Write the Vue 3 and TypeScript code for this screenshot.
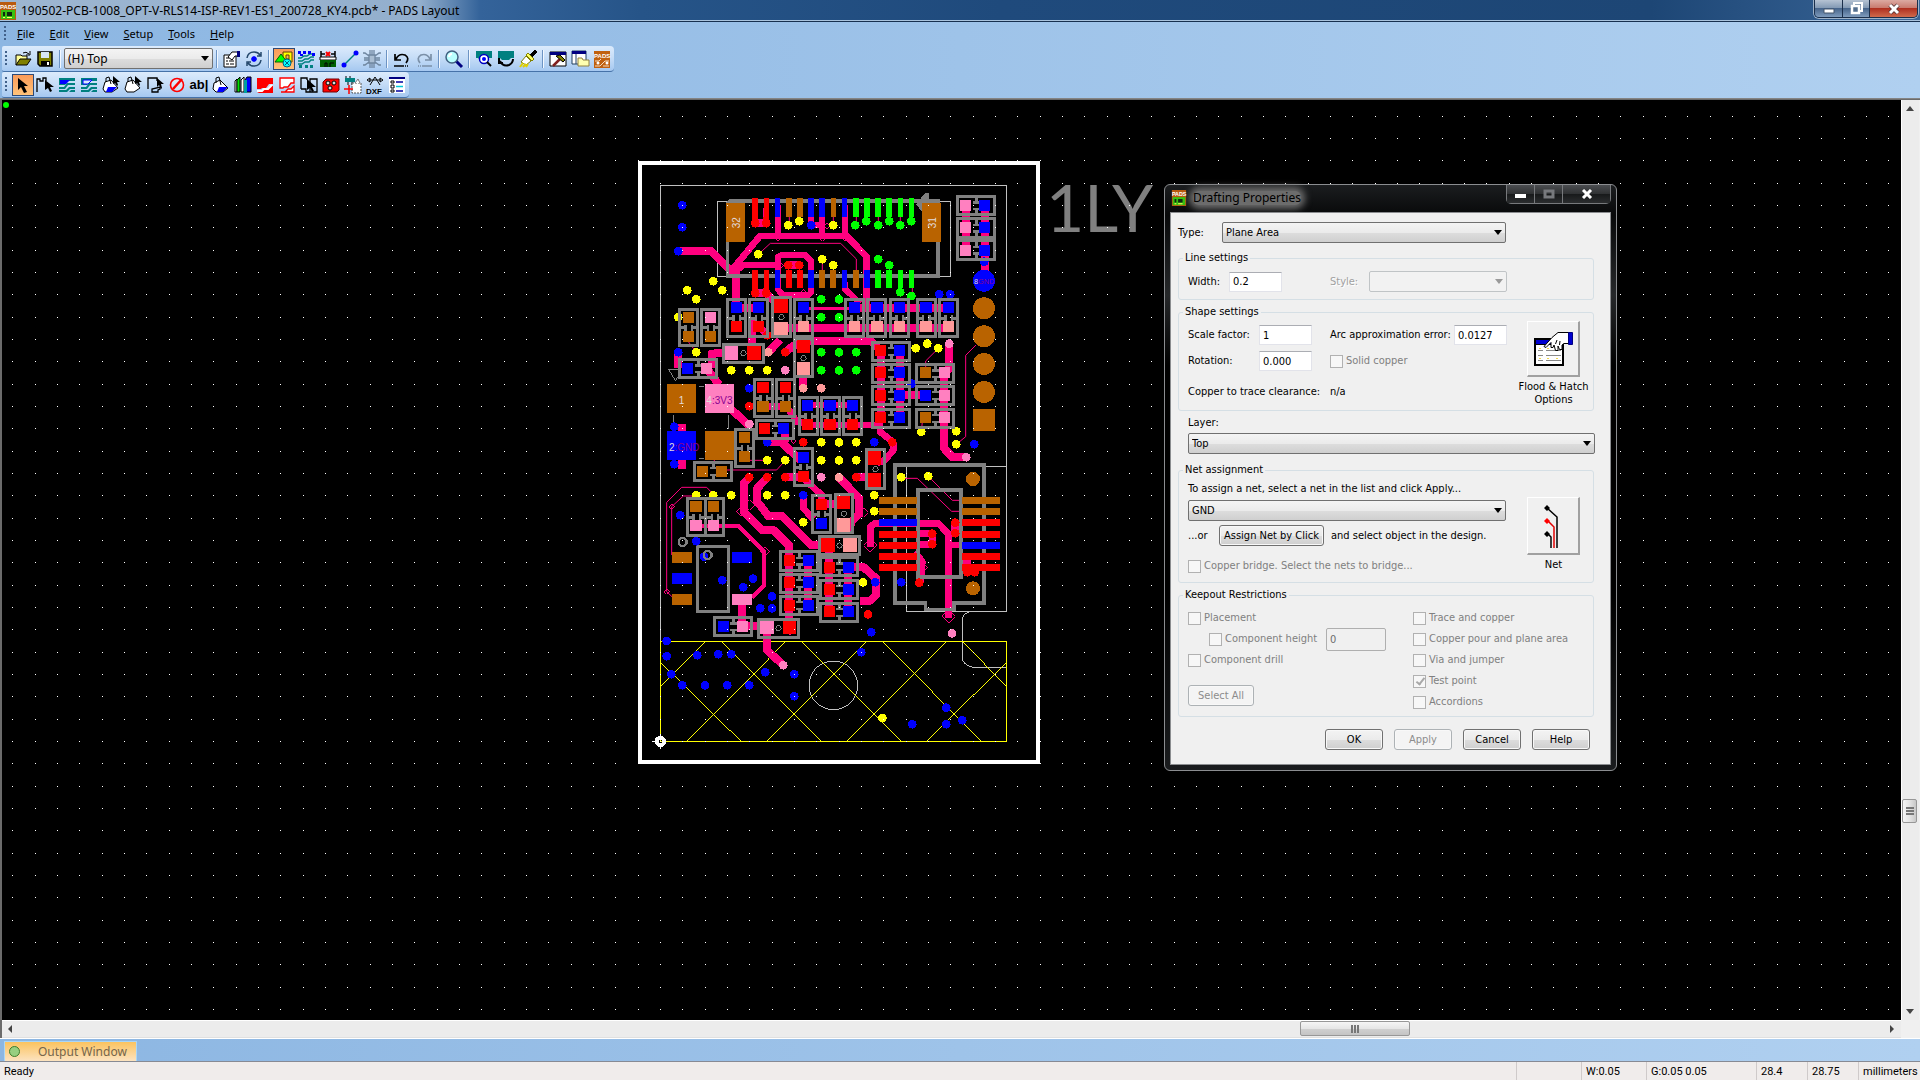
<script setup lang="ts">
import { ref } from 'vue'

type Pad = [x: number, y: number, w: number, h: number, fill: string]
type Trace = [width: number, points: string]
type Part = { box: [number, number, number, number]; a: Pad; b: Pad; round?: boolean }

const RED = '#ff0000'
const BLUE = '#0000ff'
const BROWN = '#b96300'
const PINK = '#ff80c0'
const SALMON = '#ff9999'
const GREEN = '#00ff00'
const YELLOW = '#ffff00'

const menus = ['File', 'Edit', 'View', 'Setup', 'Tools', 'Help']
const layer = ref('(H) Top')
const type = ref('Plane Area')
const dialogLayer = ref('Top')
const net = ref('GND')
const width = ref('0.2')
const scale = ref('1')
const arcError = ref('0.0127')
const rotation = ref('0.000')

const icons: Record<string, string> = {
  open: '<path d="M3 16V6h5l1 1h5v3" fill="#ffff99" stroke="#000"/><path d="M3 16l4-6h11l-4 6z" fill="#808000" stroke="#000"/><path d="M10 4q3-2 6 1m1-3v4h-4" fill="none" stroke="#000"/>',
  save: '<path d="M3 3h14v14H5l-2-2z" fill="#808000" stroke="#000" stroke-width="1.5"/><path d="M6 3h8v6H6z" fill="#d7e6f5"/><path d="M6 12h9v5H6z" fill="#000"/><path d="M12 13h2v3h-2z" fill="#fff"/>',
  props: '<path d="M2 6h12v12H2z" fill="#fff" stroke="#000"/><path d="M4 9h3m1 0h2M4 12h2m1 0h5M4 15h3m1 0h4" stroke="#000"/><path d="M6 8l4-5h7v4h-4l-3 4z" fill="#fff" stroke="#000"/><path d="M15 2h3v6h-3z" fill="#000080"/>',
  cycle: '<path d="M3 9q1-6 7-6 4 0 6 3m1-3v4h-4M17 11q-1 6-7 6-4 0-6-3m-1 3v-4h4" fill="none" stroke="#24476b" stroke-width="1.5"/><path d="M10 7v6M7 10h6M8 8l4 4m0-4l-4 4" stroke="#0000ff" stroke-width="1.5"/>',
  draft: '<path d="M9 3h9v10H9z" fill="#ffff00" stroke="#604000"/><path d="M12 6h3v4h-3z" fill="#fbb160" stroke="#604000"/><path d="M1 13l6-8 6 8z" fill="#00ff00" stroke="#006000"/><circle cx="13" cy="14" r="4" fill="#00ffff" stroke="#006080"/><path d="M11 12l4 4m0-4l-4 4" stroke="#006080"/>',
  nets: '<path d="M2 9h3l3-2h3l3-2h4M2 12h4l3-2h3l3-2h3M2 15h4l3-2h4l2-2h3" fill="none" stroke="#008080" stroke-width="1.5"/><path d="M2 2h3v3H2zM7 2h3v3H7zM12 2h3v3h-3zM16 4h3v3h-3zM4 5h3v2H4z" fill="#0000ff"/><path d="M3 16h3v3H3zM9 16h3v3H9zM14 16h3v3h-3z" fill="#008080"/>',
  dims: '<path d="M3 2v7m14-7v7M3 5h4m6 0h4" stroke="#000" stroke-width="1.5"/><path d="M8 3l4 4m0-4l-4 4" stroke="#f00" stroke-width="2"/><path d="M2 8h16v3H2z" fill="#fff" stroke="#000"/><path d="M2 11h16v7H2z" fill="#006000"/><path d="M7 18v-4h2v4m3 0v-4h4" stroke="#000" fill="none"/>',
  link: '<path d="M4 16L16 4" stroke="#008080" stroke-width="1.5"/><circle cx="4" cy="16" r="2.5" fill="#0000ff"/><circle cx="16" cy="4" r="2.5" fill="#0000ff"/>',
  chip: '<path d="M7 6h6v8H7zM8 6V1m2 5V1m2 5V1M8 14v5m2-5v5m2-5v5M7 7L3 4H1m6 5H2m5 2H2m5 2l-4 3H1M13 7l4-3h2m-6 5h5m-5 2h5m-5 2l4 3h2" fill="#a9bdd2" stroke="#6f86a0" stroke-width="1.3"/>',
  undo: '<path d="M3 5v6h6M4 10q3-6 9-4 5 3 1 8" fill="none" stroke="#000" stroke-width="1.7"/><path d="M2 17h14" stroke="#000" stroke-width="1.5" stroke-dasharray="10 1 1 1"/>',
  redo: '<path d="M17 5v6h-6M16 10q-3-6-9-4-5 3-1 8" fill="none" stroke="#7b90a8" stroke-width="1.7"/><path d="M4 17h14" stroke="#7b90a8" stroke-width="1.5" stroke-dasharray="1 1 1 1 10"/>',
  zoom: '<path d="M12 12l6 6" stroke="#000080" stroke-width="3"/><circle cx="8" cy="8" r="6" fill="#b9ffff" stroke="#406080" stroke-width="1.5"/><path d="M5 8q0-3 3-3" stroke="#fff" fill="none" stroke-width="2"/>',
  view1: '<path d="M2 2h16v7h-3l-2 2H6L4 9H2z" fill="#008080"/><circle cx="10" cy="10" r="4.500" fill="#fff" stroke="#0000c0" stroke-width="1.5"/><circle cx="10" cy="10" r="2" fill="#0000ff"/><path d="M13 13l4 4" stroke="#000" stroke-width="2"/>',
  view2: '<path d="M2 2h16v7h-3l-2 2H6L4 9H2z" fill="#008080"/><path d="M3 9v5h4M4 12q3 6 9 4 4-2 4-6" fill="none" stroke="#000" stroke-width="2"/>',
  brush: '<path d="M12 6l5-5 2 2-5 5z" fill="#000" stroke="#000"/><path d="M8 7l5 5-5 4-5-3z" fill="#fff" stroke="#808000"/><path d="M8 6l2-2 6 6-2 2z" fill="#ffff60" stroke="#808000"/><path d="M2 18l3-4m0 4l3-3m0 3l2-3" stroke="#e0d000" stroke-width="2"/>',
  hammer: '<path d="M2 3h16v14H2z" fill="#fff" stroke="#000"/><path d="M2 3h16v3H2z" fill="#000080"/><path d="M5 17l7-7" stroke="#802020" stroke-width="2.500"/><path d="M8 7l4-1 5 5-2 2z" fill="#808000" stroke="#000"/>',
  files: '<path d="M2 2h14v13H2z" fill="#fff" stroke="#204060"/><path d="M2 2h14v3H2z" fill="#000080"/><path d="M6 5v10" stroke="#204060"/><path d="M8 17V9h4l1 2h6v6z" fill="#ffffb0" stroke="#908040"/>',
  select: '<path d="M5 3v12l3-3 3 6 3-1-3-6h4z" fill="#000"/>',
  corner: '<path d="M2 17V4h3v2h3V3h3v3" fill="none" stroke="#000" stroke-width="1.3"/><path d="M10 5v10l3-2 2 4 2-1-2-4h4z" fill="#000"/>',
  plane1: '<path d="M2 3h16v3H11L8 10H2zM2 12h5l3-4h8v2h-7l-3 4H2zM2 15h7l3-3h6v2h-5l-3 3H2zM12 17l2-2h4v2z" fill="#008080"/><path d="M3 5h10l-4 4H3z" fill="#0000ff"/>',
  plane2: '<path d="M2 3h16v3H11L8 10H2zM2 12h5l3-4h8v2h-7l-3 4H2zM2 15h7l3-3h6v2h-5l-3 3H2zM12 17l2-2h4v2z" fill="#008080"/><path d="M4 5h9l-4 4H4z" fill="#d9e9fa" stroke="#0000ff"/>',
  pour1: '<path d="M4 7l6-2 7 8-6 4H4l-2-3z" fill="#fff" stroke="#000"/><path d="M7 12h9l-5 5H5z" fill="#0000ff"/><path d="M5 7V3l3-1 2 7" fill="none" stroke="#000"/><path d="M12 1v8l2-1 2 3 1-1-1-3h3z" fill="#000"/>',
  pour2: '<path d="M4 7l6-2 7 8-6 4H4l-2-3z" fill="#fff" stroke="#000"/><path d="M5 7V3l3-1 2 7" fill="none" stroke="#000"/><path d="M12 1v8l2-1 2 3 1-1-1-3h3z" fill="#000"/>',
  area: '<path d="M3 14V3h9v3m3 6v2l-2 1v2H7v-3z" fill="none" stroke="#000" stroke-width="1.3"/><path d="M12 3v9l2-2 2 4 1-1-1-4h3z" fill="#000"/>',
  no: '<circle cx="10" cy="10" r="6.500" fill="#fff" fill-opacity=".3" stroke="#f00" stroke-width="1.6"/><path d="M6 14l9-10" stroke="#f00" stroke-width="2.500"/>',
  pour3: '<path d="M3 8l6-3 8 8-5 4H5l-3-3z" fill="#fff" stroke="#000"/><path d="M8 12h9l-5 5H6z" fill="#0000ff"/><path d="M5 8V3l3-1 2 8" fill="none" stroke="#000"/>',
  library: '<path d="M2 6l2-2v13H2z" fill="#fff" stroke="#000"/><path d="M4 5l3-3v15H4z" fill="#00e000" stroke="#000"/><path d="M8 5l3-3v15H8z" fill="#fff" stroke="#000"/><path d="M12 5l2-3h4v15h-6z" fill="#0000ff" stroke="#000"/><path d="M11 5h3v13h-3z" fill="#00a0a0"/>',
  hatch1: '<path d="M2 3h16v6h-4l-3 4H7l-1 1H2z" fill="#f00"/><path d="M2 18h16v-7h-3l-3 4H8z" fill="#f00"/><path d="M2 16h5l2-2h4l4-4" stroke="#fff" fill="none" stroke-width="2"/>',
  hatch2: '<path d="M3 3h14v5h-3l-3 4H7l-1 1H3zM4 17h4l3-3h3l3-3v6z" fill="#fff" stroke="#f00" stroke-width="1.3"/>',
  pages: '<path d="M2 14V3h6v2M2 14h5v3h4M11 4h7v13h-7z" fill="none" stroke="#000" stroke-width="1.3"/><path d="M8 4v11l3-2 2 4 2-1-2-4h4z" fill="#000"/>',
  redchip: '<path d="M5 4h13v11l-2 2H2V7z" fill="#f00" stroke="#700000"/><circle cx="7" cy="8" r="2" fill="#ddd" stroke="#000"/><circle cx="13" cy="8" r="2" fill="#ddd" stroke="#000"/><circle cx="9" cy="13" r="2" fill="#ddd" stroke="#000"/>',
  place: '<path d="M2 3h10v4H2z" fill="#008080"/><path d="M5 7v3m4-3v3M3 3V1m4 2V1" stroke="#000"/><path d="M9 8h9v10H9z" fill="#fff" stroke="#555" stroke-dasharray="2 1"/><path d="M12 8l3-4 2 4" fill="#fff" stroke="#777"/><path d="M6 10v9M1 14h9" stroke="#f00" stroke-width="1.5"/>',
  list: '<path d="M2 2h16v16H2z" fill="#fff"/><path d="M2 2h16v2H2z" fill="#000080"/><path d="M4 6h3v2H4zM4 10h3v3H4zM4 15h3v2H4z" fill="#fff" stroke="#000"/><path d="M9 7h7M9 16h7" stroke="#0000a0" stroke-width="1.5"/><path d="M9 11.500h7" stroke="#00c8d8" stroke-width="1.5"/>',
}

const mainTools = [
  ['props', 'cycle'],
  ['draft', 'nets', 'dims', 'link', 'chip'],
  ['undo', 'redo'],
  ['zoom'],
  ['view1', 'view2', 'brush'],
  ['hammer', 'files', 'pads'],
]
const draftTools = [
  'select', 'corner', 'plane1', 'plane2', 'pour1', 'pour2', 'area', 'no', 'text',
  'pour3', 'library', 'hatch1', 'hatch2', 'pages', 'redchip', 'place', 'dxf', 'list',
]

/* Design grid, laid out from the board origin. */
const GRID = 22.335
const gridPath = Array.from({ length: 60 }, (_, r) =>
  Array.from({ length: 150 }, (_, c) => {
    const x = Math.round(660 + (c - 29) * GRID)
    const y = Math.round(741 + (r - 28) * GRID)
    return `M${x} ${y}h1v1h-1z`
  }).join(''),
).join('')

/* Board geometry is in units of a third of a pixel. */
const horizontal = (x: number, y: number, px: number, py: number, c1: string, c2: string, w = 120): Part => ({
  box: [x, y, w, 63],
  a: [px, py, 33, 33, c1],
  b: [px + 57, py, 33, 33, c2],
})
const vertical = (x: number, y: number, px: number, py: number, c1: string, c2: string, s = 33): Part => ({
  box: [x, y, 62, 118],
  a: [px, py, s, 33, c1],
  b: [px, py + 57, s, 33, c2],
})

const parts: Part[] = [
  horizontal(978, 121, 990, 135, PINK, BLUE),
  horizontal(978, 188, 990, 201, PINK, BLUE),
  horizontal(978, 254, 990, 269, PINK, BLUE),
  vertical(289, 430, 303, 441, BLUE, RED),
  vertical(356, 430, 369, 441, BLUE, RED),
  { box: [423, 424, 63, 126], a: [432, 432, 42, 42, RED], b: [432, 501, 42, 39, SALMON], round: true },
  vertical(490, 430, 504, 441, BLUE, SALMON),
  vertical(643, 430, 657, 441, BLUE, SALMON),
  vertical(710, 430, 723, 441, BLUE, SALMON, 36),
  vertical(778, 430, 791, 441, BLUE, SALMON),
  vertical(858, 430, 870, 441, BLUE, SALMON, 36),
  vertical(925, 430, 939, 441, BLUE, SALMON),
  vertical(145, 459, 159, 471, BROWN, BROWN),
  vertical(212, 459, 225, 471, PINK, BROWN),
  { box: [277, 564, 127, 62], a: [285, 573, 39, 42, PINK], b: [351, 573, 42, 42, RED], round: true },
  { box: [490, 550, 61, 120], a: [501, 555, 39, 39, RED], b: [501, 621, 39, 39, SALMON], round: true },
  horizontal(724, 558, 735, 570, RED, BLUE),
  horizontal(724, 624, 735, 637, RED, BLUE),
  horizontal(724, 690, 735, 705, RED, BLUE),
  horizontal(724, 759, 735, 771, RED, BLUE),
  horizontal(145, 610, 156, 624, BLUE, PINK),
  horizontal(856, 625, 870, 637, BROWN, PINK),
  horizontal(856, 690, 870, 705, BLUE, PINK),
  horizontal(856, 759, 870, 771, BROWN, PINK),
  vertical(370, 670, 381, 681, RED, BROWN, 36),
  vertical(437, 670, 450, 681, RED, BROWN),
  vertical(505, 724, 516, 735, BLUE, RED),
  vertical(571, 724, 582, 735, BLUE, RED, 36),
  vertical(638, 724, 651, 735, BLUE, RED),
  horizontal(376, 792, 387, 804, RED, BLUE),
  vertical(314, 820, 327, 830, BROWN, BROWN),
  horizontal(190, 918, 201, 933, BROWN, BROWN),
  vertical(490, 877, 504, 891, BLUE, RED),
  { box: [706, 879, 61, 127], a: [714, 889, 40, 40, RED], b: [714, 955, 40, 40, RED], round: true },
  vertical(544, 1018, 558, 1032, RED, BLUE),
  { box: [612, 1015, 59, 122], a: [621, 1023, 39, 39, RED], b: [621, 1089, 40, 42, SALMON], round: true },
  { box: [565, 1141, 127, 62], a: [573, 1149, 42, 42, RED], b: [639, 1149, 42, 42, SALMON], round: true },
  vertical(169, 1027, 180, 1038, BROWN, PINK, 36),
  vertical(224, 1027, 234, 1038, BROWN, PINK),
  horizontal(448, 1187, 462, 1201, RED, BLUE),
  horizontal(568, 1204, 582, 1221, RED, BLUE),
  horizontal(448, 1254, 462, 1267, RED, BLUE),
  horizontal(448, 1320, 462, 1335, RED, BLUE),
  horizontal(568, 1272, 582, 1287, RED, BLUE),
  horizontal(568, 1341, 582, 1353, RED, BLUE),
  horizontal(250, 1384, 264, 1398, BLUE, PINK),
  { box: [382, 1389, 127, 62], a: [390, 1398, 42, 40, PINK], b: [459, 1398, 39, 40, RED], round: true },
]

const isWide = (p: Part) => p.box[2] > p.box[3]
const marks = (p: Part) => {
  const [x, y, w, h] = p.box
  const cx = Math.round(x + w / 2)
  const cy = Math.round(y + h / 2)
  return isWide(p)
    ? `M${cx - 4} ${y + 8}h9v10h5v7h-19v-7h5zM${cx - 4} ${y + h - 8}h9v-10h5v-7h-19v7h5z`
    : `M${x + 8} ${cy - 4}v9h10v5h7v-19h-7v5zM${x + w - 8} ${cy - 4}v9h-10v5h-7v-19h7v5z`
}

const traces: Trace[] = [
  [24, '145,288 243,288 306,352'],
  [20, '300,352 390,243 650,243 710,305 710,460'],
  [18, '444,150 444,243'], [18, '577,160 577,243'], [18, '645,150 645,243'],
  [18, '543,180 543,211 577,211'],
  [18, '310,354 340,331 450,331'],
  [18, '444,380 444,306 455,300 525,300 543,318 543,412 535,421 460,421 444,404 444,370'],
  [24, '318,345 318,450'],
  [18, '645,380 645,402 690,445'],
  [18, '376,160 376,205'], [18, '409,160 409,205'], [24, '376,205 409,205'],
  [24, '475,331 508,331'], [24, '376,415 409,415 435,440'],
  [24, '320,459 400,459'], [9, '520,461 680,461'], [24, '673,459 955,459'],
  [24, '460,519 955,519'], [24, '466,592 490,572 520,558 722,558 750,585'],
  [24, '415,592 450,555'], [24, '365,490 365,600'], [20, '385,510 412,541'],
  [24, '958,566 958,640 942,660 942,880 968,907 1009,907'],
  [24, '1007,150 1007,290'], [24, '1065,150 1065,376'],
  [24, '752,580 752,790'], [24, '810,580 810,790'], [24, '810,720 890,720'],
  [24, '145,592 145,640'], [24, '245,640 245,596 300,592'], [24, '230,640 268,690'],
  [24, '306,765 358,812'], [24, '155,806 155,942'], [24, '518,650 518,700'],
  [20, '385,755 470,755 500,800 540,810 750,810 750,830 790,862 790,885 765,915 740,925'],
  [24, '412,862 455,862 510,915'], [24, '466,835 466,862'], [24, '470,965 520,965'], [24, '679,967 733,967'],
  [18, '530,750 670,750'],
  [20, '520,970 575,1020 575,1055'], [24, '574,1048 640,1048'],
  [20, '520,1021 520,1060 550,1092'],
  [24, '627,967 688,1030 688,1075 665,1100 655,1130'],
  [24, '358,967 342,985 342,1070 395,1125 430,1125 478,1172 478,1410'],
  [24, '412,967 382,1000 382,1040 415,1083 455,1083 542,1170 590,1170'],
  [12, '200,1112 325,1112 402,1190 402,1292 366,1328'],
  [24, '336,1340 336,1400'], [24, '350,1413 400,1413'], [24, '411,1430 411,1485 460,1531'],
  [24, '597,1170 597,1370'], [24, '535,1216 535,1350'], [24, '655,1236 655,1370'],
  [24, '660,1236 700,1236 738,1270 738,1320 722,1337 690,1337'],
  [20, '721,1175 721,1115 735,1105 925,1105 955,1137 955,1390'],
  [20, '861,1136 907,1136 907,1168 861,1168'], [20, '950,1170 1000,1170'],
  [24, '976,1103 976,1135'], [20, '855,1190 877,1220 873,1280'], [24, '1010,1200 1010,1245'],
  [3, '385,298 421,265 632,265 679,312 679,350'],
  [3, '1038,570 1007,601 1007,845 979,868'], [3, '925,580 887,618 887,645'],
  [3, '466,916 440,945 290,945'], [3, '345,916 412,916'],
  [3, '110,1310 110,1042 155,997 230,997 250,1018'], [3, '125,1200 125,1055 160,1023 200,1023'],
  [3, '110,1310 126,1325'],
  [3, '814,970 862,970 965,1069 996,1069'], [3, '895,964 967,1036 996,1036'],
  [3, '478,180 478,211'], [3, '510,180 510,199'], [3, '610,180 610,211'], [3, '679,180 679,211'],
  [3, '745,180 745,211'], [3, '811,180 811,211'], [3, '577,313 577,350'], [3, '610,331 610,350'],
  [3, '847,390 847,423'], [3, '175,560 199,592'], [3, '877,800 874,830'], [3, '255,900 250,940'],
]

const diamonds: [number, number, number][] = [
  [721, 1171, 20], [956, 1384, 20], [358, 1050, 16], [333, 1069, 14], [701, 1073, 14],
  [125, 1055, 8], [110, 1310, 8], [405, 1190, 14], [880, 1237, 13], [444, 250, 9], [577, 250, 9],
  [590, 213, 9], [645, 250, 9], [452, 331, 9], [520, 412, 9], [490, 858, 8], [480, 1430, 9],
]

const vias: [string, number[][]][] = [
  [BLUE, [
    [157, 151], [157, 217], [145, 289], [544, 211], [928, 418], [961, 418], [1063, 320], [145, 592],
    [358, 700], [133, 815], [133, 928], [412, 862], [845, 686], [733, 862], [520, 1021], [151, 1081],
    [199, 1159], [222, 1205], [1033, 868], [277, 1276], [369, 1271], [340, 1297], [426, 1324],
    [426, 1360], [391, 1360], [736, 1282], [814, 1282], [724, 1432], [110, 1458], [110, 1504],
    [202, 1501], [265, 1498], [304, 1498], [124, 1558], [157, 1591], [225, 1591], [292, 1591],
    [358, 1591], [406, 1552], [493, 1558], [493, 1624], [694, 1492], [847, 1708], [949, 1658],
    [949, 1708], [997, 1696],
  ]],
  [YELLOW, [
    [475, 211], [508, 199], [610, 211], [385, 298], [577, 313], [610, 331], [250, 379], [277, 406],
    [172, 406], [199, 433], [145, 487], [199, 592], [857, 580], [892, 566], [925, 580], [304, 646],
    [358, 646], [412, 646], [874, 830], [979, 829], [979, 868], [574, 862], [627, 862], [679, 862],
    [574, 916], [627, 916], [679, 916], [412, 916], [466, 916], [814, 967], [895, 964], [199, 1021],
    [250, 1021], [304, 1021], [412, 1021], [466, 1021], [733, 1021], [733, 1069], [520, 1102],
    [699, 1282], [757, 1689],
  ]],
  [GREEN, [
    [676, 211], [709, 199], [745, 211], [778, 199], [811, 211], [844, 199], [745, 313], [778, 331],
    [811, 412], [844, 423], [574, 433], [627, 433], [574, 487], [627, 487], [574, 592], [627, 592],
    [679, 592], [574, 646], [627, 646], [679, 646],
  ]],
  [RED, [
    [376, 205], [409, 205], [475, 331], [508, 331], [376, 415], [409, 415], [412, 541], [466, 592],
    [358, 754], [520, 862], [787, 862], [358, 967], [412, 967], [466, 967], [679, 967], [907, 1136],
    [907, 1168], [976, 1103], [976, 1135], [868, 1283], [714, 1378], [1012, 1252], [1034, 1252],
  ]],
  [PINK, [[958, 566], [466, 646], [358, 807], [1009, 907], [574, 967], [966, 1435], [460, 1531]]],
  [SALMON, [[415, 592], [520, 700], [574, 700], [627, 967]]],
]

const row = (y: number, h: number, cols: [number, string][]): Pad[] =>
  cols.map(([x, fill]) => [x, y, 17, h, fill])
const pads: Pad[] = [
  ...row(129, 57, [
    [367, RED], [401, RED], [434, BLUE], [468, BROWN], [501, BROWN], [534, BLUE], [567, BLUE],
    [602, BROWN], [635, BLUE], [669, GREEN], [702, GREEN], [735, GREEN], [768, GREEN], [803, GREEN], [836, GREEN],
  ]),
  ...row(345, 54, [
    [367, RED], [401, RED], [434, BLUE], [468, RED], [501, RED], [534, BLUE], [567, BROWN],
    [601, BROWN], [635, BLUE], [669, BROWN], [702, BLUE], [735, GREEN], [768, GREEN], [803, GREEN], [836, GREEN],
  ]),
  [288, 143, 57, 118, BROWN], [876, 143, 57, 118, BROWN],
  [111, 687, 87, 87, BROWN], [225, 687, 87, 87, PINK], [111, 828, 87, 87, BLUE], [225, 828, 87, 87, BROWN],
  [126, 1191, 60, 33, BROWN], [306, 1191, 60, 33, BLUE], [126, 1254, 60, 33, BLUE],
  [126, 1317, 60, 33, BROWN], [306, 1317, 60, 33, PINK], [1029, 762, 66, 66, BROWN],
  ...[BROWN, BROWN, BLUE, RED, RED, RED, RED].map((c, i): Pad => [747, 1026 + Math.round(i * 33.5), 114, 21, c]),
  ...[BROWN, BROWN, RED, RED, BLUE, RED, RED].map((c, i): Pad => [996, 1026 + Math.round(i * 33.5), 114, 21, c]),
]

const hatch =
  'M91 1595L227 1459M171 1759L468 1459M411 1759L710 1459M651 1759L951 1459M891 1759L1130 1521' +
  'M91 1521L333 1759M273 1459L574 1759M513 1459L815 1759M757 1459L1054 1759M997 1459L1130 1595'

const keepoutRight = ['Trace and copper', 'Copper pour and plane area', 'Via and jumper', 'Test point', 'Accordions']
</script>

<template>
  <div class="app">
    <header class="titlebar">
      <svg class="logo" viewBox="0 0 16 18" aria-hidden="true">
        <rect width="16" height="18" fill="#b85a10" />
        <rect x="1" y="8" width="14" height="9" fill="#38c010" />
        <path d="M3 10h2v4H3zM7 10h5v4H7z" fill="#102810" />
        <path d="M3 15h2v1H3zM7 15h5v1H7z" fill="#ffff60" />
        <text x="0" y="7" class="logo-text">PADS</text>
      </svg>
      <h1>190502-PCB-1008_OPT-V-RLS14-ISP-REV1-ES1_200728_KY4.pcb* - PADS Layout</h1>
      <div class="win-buttons">
        <button aria-label="Minimize"><svg width="12" height="12"><path d="M1 6h10v4H1z" fill="#fff" stroke="#45566c" /></svg></button>
        <button class="restore" aria-label="Restore"><svg width="13" height="13"><path d="M4 1h8v8H4z" fill="#7288a3" stroke="#fff" stroke-width="2" /><path d="M2 4h7v7H2z" fill="#55708f" stroke="#fff" stroke-width="2.500" /></svg></button>
        <button class="close" aria-label="Close"><svg width="14" height="12"><path d="M3 2l8 8m0-8l-8 8" stroke="#4f3030" stroke-width="4.500" /><path d="M3 2l8 8m0-8l-8 8" stroke="#fff" stroke-width="3" /></svg></button>
      </div>
    </header>

    <div class="chrome">
      <nav class="menubar">
        <span class="grip"></span>
        <button v-for="m in menus" :key="m"><u>{{ m[0] }}</u>{{ m.slice(1) }}</button>
      </nav>
      <div class="toolbar">
        <span class="grip"></span>
        <button v-for="t in ['open', 'save']" :key="t" class="tool" :aria-label="t"><svg viewBox="0 0 20 20" v-html="icons[t]"></svg></button>
        <span class="sep"></span>
        <span class="combo layer-combo">
          <select v-model="layer" aria-label="Active layer"><option>(H) Top</option></select>
        </span>
        <template v-for="(group, gi) in mainTools" :key="gi">
          <span class="sep"></span>
          <button v-for="t in group" :key="t" class="tool" :class="{ active: t === 'draft' }" :aria-label="t">
            <svg v-if="t === 'pads'" viewBox="0 0 20 20">
              <rect x="2" y="2" width="16" height="17" fill="#c06010" />
              <text x="2" y="9" class="logo-text">PADS</text>
              <path d="M3 12h4l2-2m-6 7h5l5-5h4M11 17h6" fill="none" stroke="#f4dcc0" />
              <circle cx="6" cy="14" r="1.500" fill="#fff" /><circle cx="15" cy="14" r="1.500" fill="#fff" />
            </svg>
            <svg v-else viewBox="0 0 20 20" v-html="icons[t]"></svg>
          </button>
        </template>
      </div>
      <div class="toolbar">
        <span class="grip"></span>
        <button v-for="t in draftTools" :key="t" class="tool" :class="{ active: t === 'select' }" :aria-label="t">
          <span v-if="t === 'text'" class="ab">ab|</span>
          <svg v-else-if="t === 'dxf'" viewBox="0 0 20 20">
            <path d="M10 2l-5 8m5-8l5 8M4 5h12M2 5l3-2v4zM18 5l-3-2v4z" fill="none" stroke="#000" />
            <text x="1" y="19" class="dxf">DXF</text>
          </svg>
          <svg v-else viewBox="0 0 20 20" v-html="icons[t]"></svg>
        </button>
      </div>
    </div>

    <main class="workspace">
      <div class="canvas">
        <svg class="board" aria-label="Board design">
          <g transform="translate(-2 -100)">
            <circle cx="6" cy="105" r="3" fill="#00ff00" />
            <text x="1046" y="232" class="layer-name">1LY</text>
            <g transform="translate(630 155) scale(.33333)" shape-rendering="crispEdges">
              <rect x="30" y="24" width="1194" height="1797" fill="none" stroke="#fff" stroke-width="12" />
              <g fill="none" stroke="#c0c0c0" stroke-width="3">
                <path d="M91 1458V91H1130V1369H829V935H1130" />
                <path d="M262 139H963V364H262z" />
                <path d="M1023 1369Q997 1375 997 1397V1508Q997 1530 1030 1537H1130" />
                <circle cx="610" cy="1591" r="73" />
                <path d="M115 643H150M115 643L137 677L150 655M207 694H222M130 780V822M296 780V822M207 910H222" stroke="#808080" />
              </g>
              <path :d="hatch" stroke="#ffff00" stroke-width="3" />
              <rect x="91" y="1459" width="1039" height="300" fill="none" stroke="#ffff00" stroke-width="3" />
              <polyline v-for="(t, i) in traces" :key="i" :points="t[1]" fill="none" stroke="#ff007f" :stroke-width="t[0]" stroke-linejoin="round" />
              <path v-for="(d, i) in diamonds" :key="i" :d="`M${d[0] - d[2]} ${d[1]}l${d[2]} ${-d[2]}l${d[2]} ${d[2]}l${-d[2]} ${d[2]}z`" fill="none" stroke="#ff007f" stroke-width="3" />
              <g fill="none" stroke="#808080" stroke-width="11">
                <path d="M293 363V145L300 138H924V363z" />
                <path d="M795 930H1063V1344H973V1364H887V1344H795z" />
                <path d="M864 1005H994V1266H864z" />
                <rect x="202" y="1175" width="94" height="195" stroke-width="9" />
              </g>
              <path d="M858 148L884 115L897 113V132L878 150V172z" fill="#808080" />
              <rect v-for="(p, i) in pads" :key="i" :x="p[0]" :y="p[1]" :width="p[2]" :height="p[3]" :fill="p[4]" />
              <path d="M376 186V205M409 186V205M376 399V415M409 399V415" stroke="#ff0000" stroke-width="17" />
              <circle v-for="y in [460, 544, 627, 711]" :key="y" cx="1062" :cy="y" r="33" :fill="BROWN" />
              <circle v-for="y in [972, 1300]" :key="y" cx="1029" :cy="y" r="21" :fill="BROWN" />
              <circle cx="1062" cy="377" r="33" :fill="BLUE" />
              <g v-for="[fill, spots] in vias" :key="fill" :fill="fill">
                <circle v-for="(s, i) in spots" :key="i" :cx="s[0]" :cy="s[1]" r="13" />
              </g>
              <g v-for="(p, i) in parts" :key="i">
                <rect :x="p.box[0] + 4" :y="p.box[1] + 4" :width="p.box[2] - 8" :height="p.box[3] - 8" fill="none" stroke="#808080" stroke-width="9" />
                <circle v-if="p.round" :cx="p.box[0] + p.box[2] / 2" :cy="p.box[1] + p.box[3] / 2" r="8" fill="none" stroke="#808080" stroke-width="3" />
                <path v-else :d="marks(p)" fill="#808080" />
                <rect :x="p.a[0]" :y="p.a[1]" :width="p.a[2]" :height="p.a[3]" :fill="p.a[4]" />
                <rect :x="p.b[0]" :y="p.b[1]" :width="p.b[2]" :height="p.b[3]" :fill="p.b[4]" />
              </g>
              <circle cx="158" cy="1161" r="12" fill="none" stroke="#808080" stroke-width="7" />
              <circle cx="233" cy="1200" r="12" fill="none" stroke="#808080" stroke-width="7" />
              <g class="pad-names">
                <text transform="translate(331 220) rotate(-90)">32</text>
                <text transform="translate(919 220) rotate(-90)">31</text>
                <text x="146" y="748">1</text>
                <text x="229" y="748">4<tspan class="net-name">:3V3</tspan></text>
                <text x="117" y="889">2<tspan class="net-name">:GND</tspan></text>
                <text x="1032" y="388" class="small">8<tspan class="net-name">GND</tspan></text>
              </g>
              <circle cx="91" cy="1759" r="11" fill="none" stroke="#fff" stroke-width="12" />
              <path d="M66 1759H82M100 1759H108M91 1736V1750M91 1768V1782" stroke="#fff" stroke-width="4" />
            </g>
            <path :d="gridPath" fill="#fff" shape-rendering="crispEdges" />
          </g>
        </svg>

        <form class="dialog" aria-label="Drafting Properties" @submit.prevent>
          <div class="dialog-title">
            <svg class="logo" viewBox="0 0 16 18" aria-hidden="true">
              <rect width="16" height="18" fill="#b85a10" />
              <rect x="1" y="8" width="14" height="9" fill="#38c010" />
              <path d="M3 10h2v4H3zM7 10h5v4H7z" fill="#102810" />
              <path d="M3 15h2v1H3zM7 15h5v1H7z" fill="#ffff60" />
              <text x="0" y="7" class="logo-text">PADS</text>
            </svg>
            <h2>Drafting Properties</h2>
            <div class="dialog-buttons">
              <button type="button" aria-label="Minimize"><svg width="12" height="12"><path d="M0 6h11v4H0z" fill="#fff" /></svg></button>
              <button type="button" disabled aria-label="Maximize"><svg width="12" height="10"><path d="M2 2h8v6H2z" fill="none" stroke="#77797d" stroke-width="3" /></svg></button>
              <button type="button" class="wide" aria-label="Close"><svg width="12" height="10"><path d="M2 1l8 8m0-8L2 9" stroke="#fff" stroke-width="3" /></svg></button>
            </div>
          </div>
          <div class="dialog-body">
            <div class="type-row">
              <label for="type">Type:</label>
              <span class="combo"><select id="type" v-model="type"><option>Plane Area</option></select></span>
            </div>

            <fieldset class="line-group">
              <legend>Line settings</legend>
              <div class="line-row">
                <label for="width">Width:</label>
                <input id="width" v-model="width" type="text" />
                <label for="style" class="off engraved">Style:</label>
                <span class="combo disabled"><select id="style" disabled></select></span>
              </div>
            </fieldset>

            <fieldset class="shape-group">
              <legend>Shape settings</legend>
              <div class="shape-row">
                <label for="scale">Scale factor:</label>
                <input id="scale" v-model="scale" type="text" />
                <label for="arc">Arc approximation error:</label>
                <input id="arc" v-model="arcError" type="text" />
                <label for="rotation">Rotation:</label>
                <input id="rotation" v-model="rotation" type="text" />
                <label class="check off"><input type="checkbox" disabled />Solid copper</label>
                <span></span>
                <span class="clearance">Copper to trace clearance:</span>
                <span>n/a</span>
              </div>
              <div class="side">
                <button type="button" class="picture" aria-label="Flood &amp; Hatch Options">
                  <svg width="44" height="40" viewBox="0 0 44 40">
                    <path d="M4 10h28v26H4z" fill="#fff" stroke="#000" stroke-width="2" />
                    <path d="M5 11h26v4H5z" fill="#0000d0" />
                    <path d="M5 15.500h26" stroke="#000" />
                    <path d="M7 21.500h5m3 0h15M7 26.500h5m3 0h15M7 31.500h5m3 0h15" stroke="#888" />
                    <path d="M8 19.500h2m6 0h2m7 0h2M8 29.500h2m6 0h2m7 0h2" stroke="#f2d848" />
                    <path d="M13 17.500L21 8.500L27 3.500H38V14.500H33L31 16V20.500H28.500L27 17V21.500H24.500L23 16L22 18.500H20L20 13.500L15 18.500z" fill="#fff" stroke="#000" />
                    <path d="M24.500 15L26 11M28.500 16L29 12" stroke="#000" />
                    <path d="M37.500 3.500h4v12h-4z" fill="#0000d0" stroke="#000080" />
                  </svg>
                </button>
                <span>Flood &amp; Hatch<br />Options</span>
              </div>
            </fieldset>

            <div class="layer-row">
              <label for="layer">Layer:</label>
              <span class="combo"><select id="layer" v-model="dialogLayer"><option>Top</option></select></span>
            </div>

            <fieldset class="net-group">
              <legend>Net assignment</legend>
              <div class="net-main">
                <label for="net">To assign a net, select a net in the list and click Apply...</label>
                <span class="combo"><select id="net" v-model="net"><option>GND</option></select></span>
                <div class="assign-row">
                  <span>...or</span>
                  <button type="button" class="push">Assign Net by Click</button>
                  <span>and select object in the design.</span>
                </div>
                <label class="check off"><input type="checkbox" disabled />Copper bridge. Select the nets to bridge...</label>
              </div>
              <div class="side">
                <button type="button" class="picture" aria-label="Net">
                  <svg width="24" height="46" viewBox="0 0 24 46">
                    <g fill="none">
                      <path d="M6 5L16 14V45" stroke="#000" stroke-width="1.500" />
                      <path d="M7 18L13 24V45" stroke="#e00000" stroke-width="1.500" />
                      <path d="M7 31L10 34V45" stroke="#000" stroke-width="1.500" />
                    </g>
                    <path d="M3 5l3-3 3 3-3 3zM3 31l3-3 3 3-3 3z" fill="#000" /><path d="M3 18l3-3 3 3-3 3z" fill="#f00" />
                  </svg>
                </button>
                <span>Net</span>
              </div>
            </fieldset>

            <fieldset class="keep-group">
              <legend>Keepout Restrictions</legend>
              <div class="keep-left">
                <label class="check off"><input type="checkbox" disabled />Placement</label>
                <div class="height-row">
                  <label class="check off"><input type="checkbox" disabled />Component height</label>
                  <input type="text" value="0" disabled aria-label="Component height value" />
                </div>
                <label class="check off"><input type="checkbox" disabled />Component drill</label>
                <button type="button" class="push" disabled>Select All</button>
              </div>
              <div class="keep-right">
                <label v-for="k in keepoutRight" :key="k" class="check off"><input type="checkbox" disabled :checked="k === 'Test point'" />{{ k }}</label>
              </div>
            </fieldset>

            <div class="actions">
              <button type="submit" class="push">OK</button>
              <button type="button" class="push" disabled>Apply</button>
              <button type="button" class="push">Cancel</button>
              <button type="button" class="push">Help</button>
            </div>
          </div>
        </form>
      </div>

      <div class="vscroll">
        <button aria-label="Scroll up"><svg width="9" height="5"><path d="M0 5l4-5 4 5z" fill="#444" /></svg></button>
        <span class="before"></span>
        <span class="thumb"></span>
        <span class="after"></span>
        <button aria-label="Scroll down"><svg width="9" height="5"><path d="M0 0h8l-4 5z" fill="#444" /></svg></button>
      </div>
      <div class="hscroll">
        <button aria-label="Scroll left"><svg width="5" height="8"><path d="M4 0v8l-4-4z" fill="#444" /></svg></button>
        <span class="before"></span>
        <span class="thumb"></span>
        <span class="after"></span>
        <button aria-label="Scroll right"><svg width="5" height="8"><path d="M0 0v8l4-4z" fill="#444" /></svg></button>
      </div>
    </main>

    <div class="dock">
      <button class="output-tab"><i></i>Output Window</button>
    </div>
    <footer class="status">
      <span class="ready">Ready</span>
      <span class="c65"></span>
      <span class="c65">W:0.05</span>
      <span class="c110">G:0.05 0.05</span>
      <span class="c51">28.4</span>
      <span class="c51">28.75</span>
      <span class="c62">millimeters</span>
    </footer>
  </div>
</template>

<style>
html,
body,
#app {
  height: 100%;
}
body {
  margin: 0;
  overflow: hidden;
}
</style>

<style scoped>
* {
  box-sizing: border-box;
}
.app {
  height: 100%;
  display: flex;
  flex-direction: column;
  background: linear-gradient(90deg, #8cb6e2, #b0d0f0);
  font: 12px/16px 'Noto Sans', 'Open Sans', sans-serif;
  color: #000;
  cursor: default;
}
button,
input,
select {
  font: inherit;
  color: inherit;
  margin: 0;
}
button {
  padding: 0;
  border: 0;
  background: none;
}

/* Title bar */
.titlebar {
  height: 22px;
  flex: none;
  display: flex;
  align-items: flex-start;
  border-bottom: 1px solid #17304f;
  box-shadow: inset 0 -1px #a9c3dd;
  background: linear-gradient(90deg, #9db6d1 0, #93afcd 420px, #34639a 480px, #265488 640px, #1f4a7c 1000px, #1d4675 86%, #3a6698);
}
.logo {
  width: 16px;
  height: 18px;
  flex: none;
}
.titlebar .logo {
  margin-top: 2px;
}
.logo-text {
  font: bold 6px 'Liberation Sans', sans-serif;
  fill: #fff;
}
h1 {
  flex: 1;
  margin: 0 0 0 5px;
  font-size: 12px;
  line-height: 21px;
  font-weight: 400;
  white-space: nowrap;
}
.win-buttons {
  display: flex;
  height: 18px;
  margin-right: 2px;
  border: 1px solid #1b2f4b;
  border-top: 0;
  border-radius: 0 0 5px 5px;
  box-shadow: 0 0 0 1px #9eb2c8;
  overflow: hidden;
}
.win-buttons button {
  width: 28px;
  display: flex;
  align-items: center;
  justify-content: center;
  border-right: 1px solid #1b2f4b;
  background: linear-gradient(#b6c3d3, #8198b3 48%, #47658b 50%, #7f9cbd);
}
.win-buttons .restore {
  width: 27px;
}
.win-buttons .close {
  width: 47px;
  border-right: 0;
  background: linear-gradient(#dcaaa2, #c8786c 48%, #b03020 50%, #d06a4c);
}

/* Menu and toolbars */
.chrome {
  flex: none;
  border-bottom: 1px solid #848484;
}
.menubar {
  height: 24px;
  display: flex;
  align-items: center;
  gap: 15px;
  padding-left: 4px;
  font-size: 11px;
}
.menubar .grip {
  margin-right: -4px;
}
.grip {
  width: 2px;
  height: 16px;
  flex: none;
  background: repeating-linear-gradient(#41618a 0 2px, transparent 2px 4px);
}
.toolbar {
  width: max-content;
  height: 26px;
  display: flex;
  align-items: center;
  margin-left: 2px;
  padding: 0 0 0 3px;
  border-bottom: 1px solid #4672a8;
  border-radius: 2px 4px 4px 2px;
  background: linear-gradient(#dcebfc, #c4dcf7 50%, #a5c8f0);
}
.toolbar .grip {
  margin-right: 5px;
}
.tool {
  width: 22px;
  height: 22px;
  flex: none;
  display: flex;
  align-items: center;
  justify-content: center;
}
.tool svg {
  width: 20px;
  height: 20px;
  flex: none;
}
.tool.active {
  border: 1px solid #2d4a78;
  background: linear-gradient(#fb9b58, #ffc37a);
}
.ab {
  font: bold 13px/16px 'Liberation Sans', sans-serif;
}
.dxf {
  font: bold 8px 'Liberation Sans', sans-serif;
}
.sep {
  width: 2px;
  height: 18px;
  margin: 0 3px;
  border-left: 1px solid #6d94c4;
  border-right: 1px solid #f2f8ff;
}
.toolbar > .tool:last-child {
  margin-right: 1px;
}

/* Combo boxes */
.combo {
  position: relative;
  display: block;
  height: 21px;
}
.combo::after {
  content: '';
  position: absolute;
  right: 4px;
  top: 8px;
  border: 4px solid transparent;
  border-top: 5px solid #000;
  border-bottom: 0;
  pointer-events: none;
}
.combo select {
  width: 100%;
  height: 100%;
  display: block;
  appearance: none;
  padding: 0 16px 0 3px;
  border: 1px solid #707070;
  border-radius: 2px;
  background: linear-gradient(#f4f4f4, #ebebeb 50%, #dddddd 52%, #cfcfcf);
}
.combo.disabled select {
  border-color: #adb2b5;
  background: #f4f4f4;
}
.combo.disabled::after {
  border-top-color: #9a9a9a;
}
.layer-combo {
  width: 149px;
}

/* Work area */
.workspace {
  flex: 1;
  min-height: 0;
  display: grid;
  grid-template: minmax(0, 1fr) 18px / minmax(0, 1fr) 18px;
  padding: 1px 1px 0 2px;
  background: #f0f0f0;
  box-shadow: inset 2px 1px #6b6b6b;
}
.canvas {
  position: relative;
  overflow: hidden;
  background: #000;
}
.board {
  width: 100%;
  height: 100%;
  display: block;
}
.layer-name {
  font: 66px 'Liberation Sans Narrow', Lato, sans-serif;
  fill: #808080;
}
.pad-names {
  font: 30px 'Liberation Sans', sans-serif;
  fill: #e4dcdc;
}
.pad-names .small {
  font-size: 22px;
}
.net-name {
  fill: #8a0090;
}
.vscroll,
.hscroll {
  display: flex;
  background: #ececec;
}
.vscroll {
  flex-direction: column;
  border-left: 1px solid #fff;
}
.hscroll {
  border-top: 1px solid #fff;
  border-bottom: 1px solid #e0e0e0;
}
.vscroll button,
.hscroll button {
  width: 17px;
  height: 17px;
  flex: none;
  display: flex;
  align-items: center;
  justify-content: center;
}
.hscroll button {
  height: 15px;
}
.thumb {
  border: 1px solid #979797;
  border-radius: 2px;
  display: flex;
  align-items: center;
  justify-content: center;
}
.vscroll .thumb {
  width: 15px;
  height: 24px;
  background: linear-gradient(90deg, #f5f5f5, #e4e4e4 50%, #c8c8c8);
}
.hscroll .thumb {
  width: 110px;
  height: 15px;
  background: linear-gradient(#f5f5f5, #e6e6e6 50%, #d0d0d0 52%, #c4c4c4);
}
.thumb::after {
  content: '';
  width: 8px;
  height: 8px;
}
.vscroll .thumb::after {
  background: repeating-linear-gradient(#777 0 2px, transparent 2px 3px);
}
.hscroll .thumb::after {
  background: repeating-linear-gradient(90deg, #777 0 2px, transparent 2px 3px);
}
.vscroll .before {
  flex: 682;
}
.vscroll .after {
  flex: 180;
}
.hscroll .before {
  flex: 1281;
}
.hscroll .after {
  flex: 474;
}

/* Dock strip and status bar */
.dock {
  height: 24px;
  flex: none;
  display: flex;
  padding: 2px 0 0 4px;
  border-top: 1px solid #fff;
  border-bottom: 1px solid #878a94;
}
.output-tab {
  width: 133px;
  display: flex;
  align-items: center;
  padding-left: 4px;
  border: 1px solid #a9d6f7;
  border-bottom: 0;
  background: linear-gradient(#fbc35f, #fce3c0);
  color: #75654b;
}
.output-tab i {
  width: 11px;
  height: 11px;
  margin-right: 18px;
  border: 1px solid #3f7d2c;
  border-radius: 50%;
  background: #98cf80;
}
.status {
  height: 18px;
  flex: none;
  display: flex;
  background: #f0eceb;
  font: 11px/20px Roboto, sans-serif;
  white-space: nowrap;
  overflow: hidden;
}
.status span {
  flex: none;
  padding-left: 4px;
  border-left: 1px solid #cfcaca;
}
.status .ready {
  flex: 1;
  border: 0;
}
.c65 {
  width: 65px;
}
.c110 {
  width: 110px;
}
.c51 {
  width: 51px;
}
.c62 {
  width: 62px;
}

/* Drafting Properties dialog */
.dialog {
  position: absolute;
  left: 1162px;
  top: 84px;
  width: 453px;
  padding: 0 5px 5px;
  border: 1px solid #8b8d90;
  border-radius: 6px;
  background: linear-gradient(#1b1d1f, #08090a 30px, #26282a 110px, #000 180px, #000 70%, #1a1c1e);
  font: 11px/14px 'DejaVu Sans Condensed', 'DejaVu Sans', sans-serif;
}
.dialog-title {
  height: 27px;
  display: flex;
  align-items: flex-start;
  padding-left: 1px;
}
.dialog-title .logo {
  position: relative;
  margin-top: 5px;
  height: 16px;
}
h2 {
  margin: 6px 0 0 6px;
  font: 12px/14px 'Noto Sans', sans-serif;
  color: #000;
  border-radius: 6px;
  background: #6c6c6c;
  box-shadow: 0 0 7px 4px #6c6c6c;
}
.dialog-buttons {
  display: flex;
  height: 19px;
  margin-left: auto;
  border: 1px solid #77797c;
  border-top: 0;
  border-radius: 0 0 5px 5px;
}
.dialog-buttons button {
  width: 28px;
  display: flex;
  align-items: center;
  justify-content: center;
  background: linear-gradient(#4b4d50, #303234 48%, #17191a 50%, #2b2d2f);
  border-right: 1px solid #77797c;
}
.dialog-buttons .wide {
  width: 47px;
  border-right: 0;
}
.dialog-body {
  position: relative;
  border: 1px solid #8b8d90;
  background: #f0f0f0;
  padding: 9px 16px 14px 7px;
}
label,
.dialog-body span {
  white-space: nowrap;
}
.type-row {
  display: grid;
  grid-template-columns: 44px 284px;
  align-items: center;
  margin-bottom: 8px;
}
fieldset {
  min-width: 0;
  margin: 0;
  padding: 0 0 0 9px;
  border: 1px solid #d5dfe5;
  border-radius: 3px;
}
legend {
  height: 14px;
  margin-left: -5px;
  padding: 0 2px;
}
.dialog-body input[type='text'] {
  width: 53px;
  height: 20px;
  padding: 0 3px;
  border: 1px solid #e2e3ea;
  border-top-color: #abadb3;
  background: #fff;
}
.off {
  color: #808080;
}
.engraved {
  color: #a0a0a0;
  text-shadow: 1px 1px #fff;
}
.line-group {
  height: 49px;
}
.line-row {
  display: grid;
  grid-template-columns: 41px 101px 39px 138px;
  align-items: center;
  padding-top: 6px;
}
.shape-group {
  height: 106px;
  margin-top: 5px;
}
.shape-group,
.net-group,
.keep-group {
  position: relative;
}
.shape-row {
  display: grid;
  grid-template-columns: 71px 71px 124px 53px;
  grid-template-rows: 20px 20px 20px;
  row-gap: 6px;
  align-items: center;
  padding-top: 6px;
}
.clearance {
  grid-column: span 2;
}
.shape-row > span {
  padding-top: 10px;
}
.check {
  display: flex;
  align-items: center;
  height: 14px;
}
.check input {
  appearance: none;
  width: 13px;
  height: 13px;
  flex: none;
  margin-right: 3px;
  border: 1px solid #b1b1b1;
  background: #f7f7f7;
}
.check input:checked::after {
  content: '';
  display: block;
  width: 3px;
  height: 7px;
  margin: 0 0 0 4px;
  border: solid #a8a8a8;
  border-width: 0 2px 2px 0;
  transform: rotate(38deg);
}
.side {
  position: absolute;
  right: 0;
  top: 2px;
  width: 79px;
  display: flex;
  flex-direction: column;
  align-items: center;
  text-align: center;
  line-height: 13px;
}
.picture {
  width: 53px;
  height: 56px;
  margin-bottom: 3px;
  display: flex;
  align-items: center;
  justify-content: center;
  border: 1px solid #fff;
  border-right: 2px solid #a0a0a0;
  border-bottom: 2px solid #a0a0a0;
}
.layer-row {
  margin: 5px -1px 9px 10px;
}
.layer-row label {
  display: block;
  margin-bottom: 3px;
}
.net-group {
  height: 120px;
}
.net-main {
  width: 318px;
  padding-top: 5px;
  display: flex;
  flex-direction: column;
  gap: 4px;
}
.assign-row {
  display: grid;
  grid-template-columns: 31px 105px auto;
  align-items: center;
}
.assign-row span:last-child {
  padding-left: 7px;
}
.net-main .check {
  margin-top: 9px;
}
.net-group .side {
  top: 20px;
}
.net-group .picture {
  height: 58px;
}
.push {
  height: 21px;
  border: 1px solid #707070;
  border-radius: 3px;
  background: linear-gradient(#f3f3f3, #ebebeb 50%, #dddddd 52%, #cfcfcf);
  box-shadow: inset 0 0 0 1px #f8f8f8;
}
.push:disabled {
  border-color: #adb2b5;
  background: #f4f4f4;
  color: #8c8c8c;
}
.keep-group {
  height: 129px;
  margin-top: 5px;
}
.keep-left,
.keep-right {
  padding-top: 9px;
  display: flex;
  flex-direction: column;
  gap: 7px;
}
.keep-left {
  width: 225px;
}
.keep-right {
  position: absolute;
  left: 234px;
  top: 0;
}
.height-row {
  display: flex;
  height: 14px;
  align-items: center;
  justify-content: space-between;
  margin: 0 27px 0 21px;
}
.dialog-body .height-row input[type='text'] {
  width: 60px;
  height: 23px;
  border: 1px solid #afafaf;
  border-radius: 2px;
  background: #f0f0f0;
  color: #6d6d6d;
}
.keep-left .push {
  width: 66px;
  margin-top: 11px;
}
.actions {
  display: flex;
  justify-content: flex-end;
  gap: 11px;
  margin: 12px 4px 0 0;
}
.actions .push {
  width: 58px;
}
</style>
